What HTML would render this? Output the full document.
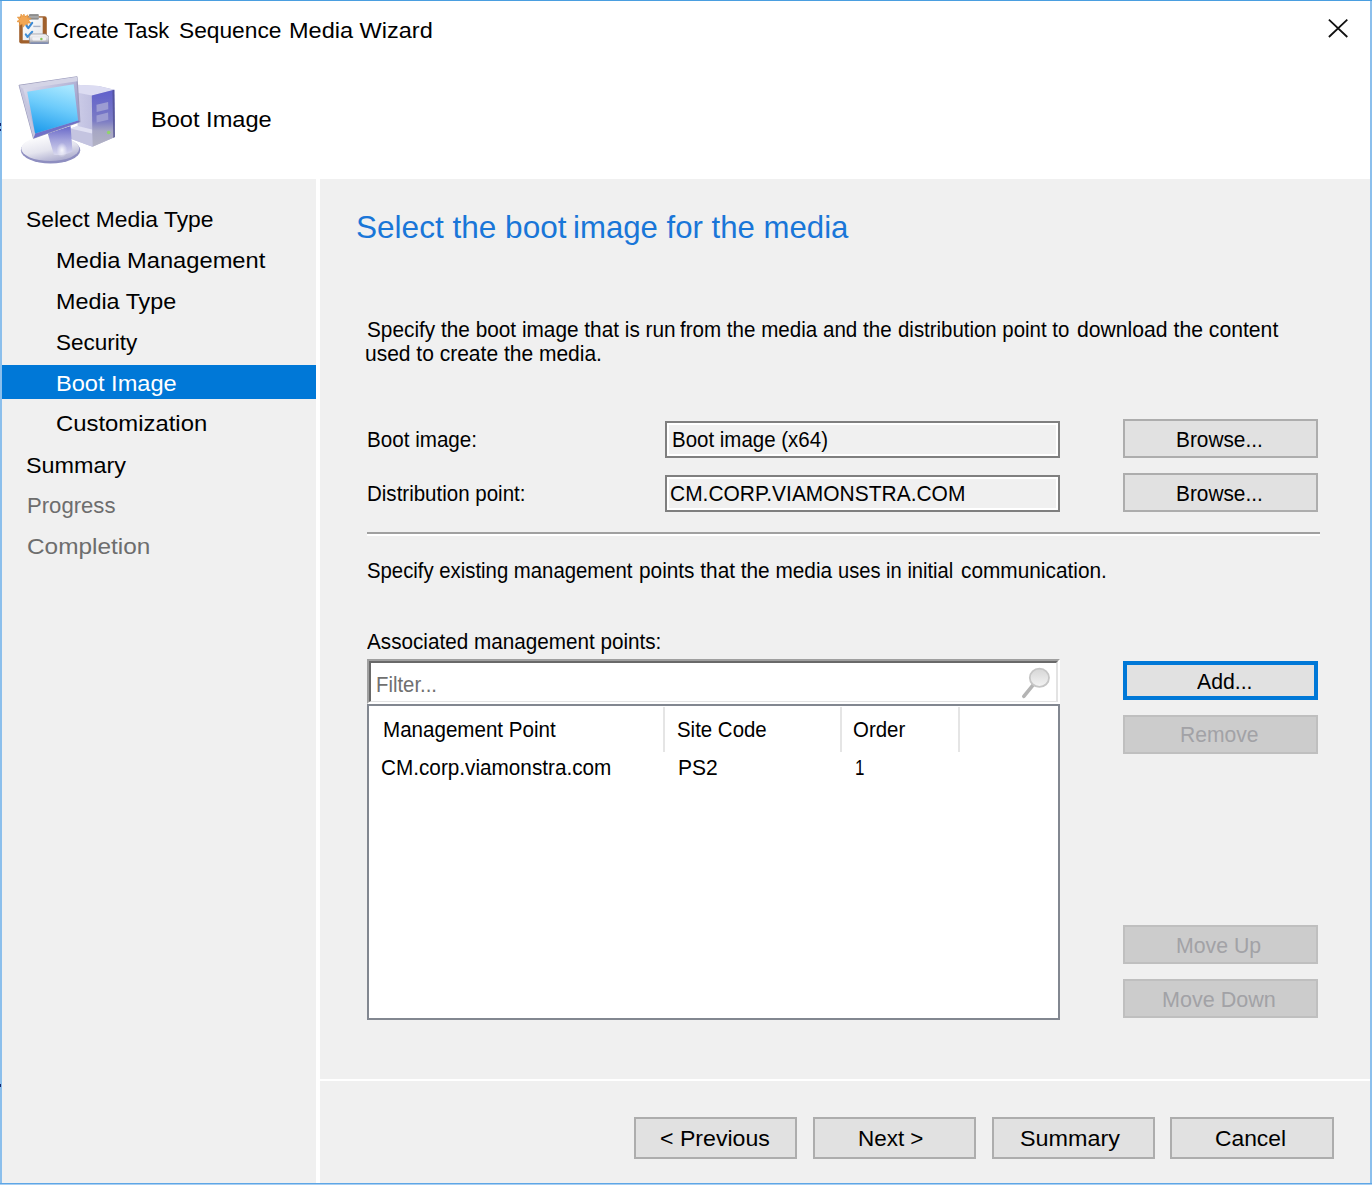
<!DOCTYPE html>
<html><head><meta charset="utf-8"><title>Create Task Sequence Media Wizard</title>
<style>
html,body{margin:0;padding:0;}
body{width:1372px;height:1185px;position:relative;overflow:hidden;background:#fff;font-family:"Liberation Sans",sans-serif;}
.a{position:absolute;box-sizing:border-box;}
.t{position:absolute;white-space:pre;line-height:1;transform-origin:0 0;font-family:"Liberation Sans",sans-serif;}
.btn{background:#e1e1e1;border:2px solid #adadad;}
.btnd{background:#cccccc;border:2px solid #bfbfbf;}
.inp{background:#f0f0f0;border:2px solid #7f7f7f;box-shadow:inset 0 0 0 2px #fff;}
.div{width:2px;height:45px;top:707px;background:#e5e5e5;}
</style></head><body>
<!-- panels -->
<div class="a" style="left:2px;top:179px;width:314px;height:1004px;background:#f0f0f0;"></div>
<div class="a" style="left:320px;top:179px;width:1050px;height:1004px;background:#f0f0f0;"></div>
<div class="a" style="left:2px;top:365px;width:314px;height:33.5px;background:#0078d7;"></div>
<div class="a" style="left:320px;top:1079px;width:1050px;height:2px;background:#fff;"></div>
<!-- window borders -->
<div class="a" style="left:0;top:0;width:2px;height:1185px;background:#8bbfec;"></div>
<div class="a" style="left:1370px;top:0;width:2px;height:1185px;background:#8bbfec;"></div>
<div class="a" style="left:0;top:0;width:1372px;height:1px;background:#4a9ee0;"></div>
<div class="a" style="left:0;top:1183px;width:1372px;height:1px;background:#5ea6e6;"></div>
<div class="a" style="left:0;top:1184px;width:1372px;height:1px;background:#a8cff2;"></div>
<div class="a" style="left:0;top:123px;width:1px;height:3px;background:#14246e;"></div>
<div class="a" style="left:0;top:129px;width:1px;height:2px;background:#14246e;"></div>
<div class="a" style="left:0;top:1084px;width:1px;height:3px;background:#14246e;"></div>
<!-- close X -->
<svg class="a" style="left:1324px;top:15px" width="28" height="26" viewBox="0 0 28 26"><path d="M4.9 4.6 L23.3 22 M23.3 4.6 L4.9 22" stroke="#111" stroke-width="1.8" fill="none"/></svg>
<!-- inputs -->
<div class="a inp" style="left:665px;top:421px;width:395px;height:37px;"></div>
<div class="a inp" style="left:665px;top:475px;width:395px;height:37px;"></div>
<!-- browse buttons -->
<div class="a btn" style="left:1123px;top:419px;width:195px;height:39px;"></div>
<div class="a btn" style="left:1123px;top:473px;width:195px;height:39px;"></div>
<!-- etched line -->
<div class="a" style="left:367px;top:532px;width:953px;height:2px;background:#a0a0a0;"></div>
<div class="a" style="left:367px;top:534px;width:953px;height:2px;background:#fff;"></div>
<!-- filter box (sunken) -->
<div class="a" style="left:367px;top:659px;width:693px;height:44.5px;background:#fff;border-top:2px solid #a0a0a0;border-left:2px solid #a0a0a0;border-right:2px solid #fff;border-bottom:2px solid #fff;"></div>
<div class="a" style="left:369px;top:661px;width:689px;height:40.5px;background:#fff;border-top:2px solid #696969;border-left:2px solid #696969;border-right:2px solid #e3e3e3;border-bottom:1.5px solid #e3e3e3;"></div>
<!-- magnifier -->
<svg class="a" style="left:1018px;top:662px" width="38" height="38" viewBox="0 0 38 38">
 <defs><linearGradient id="mg" x1="0" y1="0" x2="0" y2="1"><stop offset="0" stop-color="#d6d6d6"/><stop offset="1" stop-color="#f4f4f4"/></linearGradient></defs>
 <path d="M15.2 22.8 L5.8 34.4" stroke="#b4b4b4" stroke-width="3.6" stroke-linecap="round"/>
 <ellipse cx="21.4" cy="15.8" rx="9.6" ry="9.1" fill="url(#mg)" stroke="#c6c6c6" stroke-width="1.8"/>
</svg>
<!-- list -->
<div class="a" style="left:367px;top:703.5px;width:693px;height:316px;background:#fff;border:2px solid #828790;"></div>
<div class="a div" style="left:663px;"></div>
<div class="a div" style="left:840px;"></div>
<div class="a div" style="left:958px;"></div>
<!-- right buttons -->
<div class="a" style="left:1123px;top:660.5px;width:195px;height:39.5px;background:#e1e1e1;border:4px solid #0078d7;"></div>
<div class="a btnd" style="left:1123px;top:714.5px;width:195px;height:39px;"></div>
<div class="a btnd" style="left:1123px;top:925px;width:195px;height:39px;"></div>
<div class="a btnd" style="left:1123px;top:979px;width:195px;height:39px;"></div>
<!-- bottom buttons -->
<div class="a btn" style="left:634px;top:1116.5px;width:163px;height:42.5px;"></div>
<div class="a btn" style="left:812.5px;top:1116.5px;width:163.5px;height:42.5px;"></div>
<div class="a btn" style="left:991.5px;top:1116.5px;width:163px;height:42.5px;"></div>
<div class="a btn" style="left:1170px;top:1116.5px;width:163.5px;height:42.5px;"></div>
<!-- title icon: clipboard + star + drive (32x30 at 17,14) -->
<svg class="a" style="left:17px;top:14px" width="32" height="30" viewBox="0 0 32 30">
 <defs>
  <linearGradient id="pg" x1="0" y1="0" x2="1" y2="1"><stop offset="0" stop-color="#ffffff"/><stop offset="1" stop-color="#e4e6ea"/></linearGradient>
  <linearGradient id="dg" x1="0" y1="0" x2="0" y2="1"><stop offset="0" stop-color="#fafafa"/><stop offset=".55" stop-color="#d4d4d8"/><stop offset="1" stop-color="#8e8e96"/></linearGradient>
  <linearGradient id="cg" x1="0" y1="0" x2="0" y2="1"><stop offset="0" stop-color="#6e6e6e"/><stop offset=".5" stop-color="#b4b4b4"/><stop offset="1" stop-color="#707070"/></linearGradient>
 </defs>
 <rect x="2.2" y="2.3" width="27.6" height="27.2" rx="2.2" fill="#a0602c"/>
 <rect x="5.7" y="3.6" width="20" height="22.6" fill="url(#pg)"/>
 <rect x="12" y="0.3" width="9.8" height="5.3" rx="0.8" fill="url(#cg)"/>
 <path d="M6.7 -0.6 L8.2 2.6 L11 0.7 L10.8 4.1 L14.2 4.2 L11.9 6.6 L14 9.2 L10.7 9 L10.6 12.4 L8.1 10.2 L6.4 13.2 L5.2 10 L2.2 11.6 L2.9 8.3 L-0.4 7.6 L2.3 5.7 L0.3 3 L3.6 3.2 L3.9 -0.1 L6.1 2.3 Z" fill="#f2a653" stroke="#e08f32" stroke-width=".5"/>
 <path d="M9.4 11.6 L11.3 14.2 L15.2 8.8" fill="none" stroke="#3a88d4" stroke-width="2.1" stroke-linecap="round" stroke-linejoin="round"/>
 <path d="M8.8 20.4 L10.5 23 L15.2 17.8" fill="none" stroke="#4090d8" stroke-width="2.1" stroke-linecap="round" stroke-linejoin="round"/>
 <rect x="16.3" y="11.7" width="7.2" height="1.4" fill="#a9b3c6"/>
 <path d="M14 20 H28.4 L32 22.6 V28.4 Q32 29.7 30.6 29.7 H13.8 Q12.4 29.7 12.4 28.4 V22.6 Z" fill="url(#dg)" stroke="#8c8c96" stroke-width=".7"/>
 <rect x="15.4" y="23.2" width="13.6" height="3.2" rx="1" fill="#f4f4f6" opacity=".9"/>
 <rect x="13.6" y="28.6" width="17.4" height="0.9" fill="#6a84c4"/>
 <circle cx="24.4" cy="25" r="1.25" fill="#86c65a"/>
</svg>
<!-- computer icon (drawn in 11.39x zoom coords) -->
<svg class="a" style="left:10px;top:68px" width="120" height="104" viewBox="0 0 1367 1185">
 <defs>
  <linearGradient id="scr" x1=".6" y1="0" x2=".3" y2="1"><stop offset="0" stop-color="#a6e6ff"/><stop offset=".45" stop-color="#6ccbfb"/><stop offset="1" stop-color="#1f9cec"/></linearGradient>
  <linearGradient id="bez" x1="0" y1="0" x2="1" y2="1"><stop offset="0" stop-color="#e6e6f2"/><stop offset=".5" stop-color="#b4b4d6"/><stop offset="1" stop-color="#8484bc"/></linearGradient>
  <linearGradient id="base" x1=".2" y1="0" x2=".7" y2="1"><stop offset="0" stop-color="#ffffff"/><stop offset=".55" stop-color="#e4e4ee"/><stop offset="1" stop-color="#a8a8cc"/></linearGradient>
  <linearGradient id="twl" x1="0" y1="0" x2="1" y2="0"><stop offset="0" stop-color="#d0d0ea"/><stop offset="1" stop-color="#aeaed6"/></linearGradient>
  <linearGradient id="twr" x1="0" y1="0" x2="0" y2="1"><stop offset="0" stop-color="#6060cc"/><stop offset=".55" stop-color="#7c7cc4"/><stop offset=".72" stop-color="#a6a6c4"/><stop offset="1" stop-color="#b4b4c4"/></linearGradient>
  <radialGradient id="nh"><stop offset="0" stop-color="#fff" stop-opacity=".85"/><stop offset="1" stop-color="#fff" stop-opacity="0"/></radialGradient>
  <linearGradient id="neck" x1="0" y1="0" x2="0" y2="1"><stop offset="0" stop-color="#6666c8"/><stop offset=".5" stop-color="#a4a4dc"/><stop offset="1" stop-color="#d8d8ee"/></linearGradient>
 </defs>
 <!-- tower -->
 <path d="M758 192 L1010 205 L1188 248 L1196 785 L940 898 L690 805 L690 690 L770 660 Z" fill="url(#twl)"/>
 <path d="M758 192 L1010 205 L1188 248 L932 312 L770 282 Z" fill="#dcdcf2"/>
 <path d="M932 312 L1188 248 L1196 785 L940 898 Z" fill="url(#twr)"/>
 <path d="M1168 255 L1188 248 L1196 785 L1176 794 Z" fill="#4e4e8e" opacity=".75"/>
 <path d="M985 418 L1118 388 L1120 470 L987 500 Z" fill="#9c9cd2"/>
 <path d="M985 540 L1118 508 L1120 590 L987 622 Z" fill="#9c9cd2"/>
 <path d="M690 690 L935 745 L940 898 L690 805 Z" fill="#c4c4e0"/>
 <path d="M690 690 L770 660 L935 700 L935 745 Z" fill="#e0e0f2"/>
 <circle cx="1124" cy="736" r="20" fill="#8fd66a"/>
 <!-- base -->
 <ellipse cx="462" cy="936" rx="338" ry="152" fill="#8e8ec0"/>
 <ellipse cx="458" cy="918" rx="330" ry="142" fill="url(#base)"/>
 <!-- neck -->
 <path d="M430 745 L690 660 L712 950 Q600 1005 500 988 Z" fill="url(#neck)"/>
 <ellipse cx="592" cy="935" rx="62" ry="85" fill="url(#nh)"/>
 <!-- monitor -->
 <path d="M105 198 L762 100 L796 612 L268 800 Z" fill="url(#bez)" stroke="#9c9cbc" stroke-width="14" stroke-linejoin="round"/>
 <path d="M105 198 L762 100 L768 150 L150 240 Z" fill="#d4d4e6"/>
 <path d="M286 746 L776 598 L796 612 L268 800 Z" fill="#7070c8"/>
 <path d="M105 198 L150 240 L286 746 L268 800 Z" fill="#c6c6de"/>
 <path d="M196 272 L726 186 L776 598 L286 746 Z" fill="url(#scr)"/>
</svg>

<span class="t" style="left:53.08px;top:21.10px;font-size:21.5px;color:#000;transform:scaleX(1.0170)">Create Task</span>
<span class="t" style="left:178.80px;top:21.10px;font-size:21.5px;color:#000;transform:scaleX(1.0576)">Sequence</span>
<span class="t" style="left:288.81px;top:21.10px;font-size:21.5px;color:#000;transform:scaleX(1.0937)">Media Wizard</span>
<span class="t" style="left:150.65px;top:108.50px;font-size:22.5px;color:#000;transform:scaleX(1.0488)">Boot Image</span>
<span class="t" style="left:26.48px;top:208.80px;font-size:22.5px;color:#000;transform:scaleX(1.0153)">Select Media Type</span>
<span class="t" style="left:56.35px;top:249.70px;font-size:22.5px;color:#000;transform:scaleX(1.0523)">Media Management</span>
<span class="t" style="left:56.36px;top:290.60px;font-size:22.5px;color:#000;transform:scaleX(1.0375)">Media Type</span>
<span class="t" style="left:56.00px;top:331.50px;font-size:22.5px;color:#000;transform:scaleX(1.0009)">Security</span>
<span class="t" style="left:56.35px;top:372.50px;font-size:22.5px;color:#fff;transform:scaleX(1.0488)">Boot Image</span>
<span class="t" style="left:56.34px;top:413.30px;font-size:22.5px;color:#000;transform:scaleX(1.0607)">Customization</span>
<span class="t" style="left:26.46px;top:454.50px;font-size:22.5px;color:#000;transform:scaleX(1.0395)">Summary</span>
<span class="t" style="left:27.32px;top:495.10px;font-size:22.5px;color:#6d6d6d;transform:scaleX(0.9822)">Progress</span>
<span class="t" style="left:27.22px;top:536.00px;font-size:22.5px;color:#6d6d6d;transform:scaleX(1.0829)">Completion</span>
<span class="t" style="left:355.67px;top:212.30px;font-size:30.5px;color:#1976d8;transform:scaleX(1.0345)">Select the boot</span>
<span class="t" style="left:573.16px;top:212.30px;font-size:30.5px;color:#1976d8;transform:scaleX(1.0217)">image for the media</span>
<span class="t" style="left:367.00px;top:319.70px;font-size:21.5px;color:#000;transform:scaleX(0.9672)">Specify the boot image that is run</span>
<span class="t" style="left:679.90px;top:319.70px;font-size:21.5px;color:#000;transform:scaleX(0.9571)">from the media and the</span>
<span class="t" style="left:898.00px;top:319.70px;font-size:21.5px;color:#000;transform:scaleX(0.9490)">distribution point to</span>
<span class="t" style="left:1076.70px;top:319.70px;font-size:21.5px;color:#000;transform:scaleX(0.9847)">download the content</span>
<span class="t" style="left:364.62px;top:343.80px;font-size:21.5px;color:#000;transform:scaleX(0.9765)">used to create the media.</span>
<span class="t" style="left:366.94px;top:429.50px;font-size:21.5px;color:#000;transform:scaleX(0.9587)">Boot image:</span>
<span class="t" style="left:367.25px;top:483.50px;font-size:21.5px;color:#000;transform:scaleX(0.9541)">Distribution point:</span>
<span class="t" style="left:671.65px;top:429.50px;font-size:21.5px;color:#000;transform:scaleX(0.9526)">Boot image (x64)</span>
<span class="t" style="left:669.83px;top:483.50px;font-size:21.5px;color:#000;transform:scaleX(0.9747)">CM.CORP.VIAMONSTRA.COM</span>
<span class="t" style="left:1175.73px;top:429.60px;font-size:21.5px;color:#000;transform:scaleX(0.9688)">Browse...</span>
<span class="t" style="left:1175.73px;top:483.50px;font-size:21.5px;color:#000;transform:scaleX(0.9688)">Browse...</span>
<span class="t" style="left:367.40px;top:561.40px;font-size:21.5px;color:#000;transform:scaleX(0.9453)">Specify existing management</span>
<span class="t" style="left:639.33px;top:561.40px;font-size:21.5px;color:#000;transform:scaleX(0.9676)">points that the media</span>
<span class="t" style="left:838.46px;top:561.40px;font-size:21.5px;color:#000;transform:scaleX(0.9364)">uses in initial</span>
<span class="t" style="left:961.30px;top:561.40px;font-size:21.5px;color:#000;transform:scaleX(0.9687)">communication.</span>
<span class="t" style="left:367.00px;top:632.00px;font-size:21.5px;color:#000;transform:scaleX(0.9620)">Associated management points:</span>
<span class="t" style="left:376.35px;top:675.00px;font-size:21.5px;color:#707070;transform:scaleX(0.9450)">Filter...</span>
<span class="t" style="left:382.64px;top:719.70px;font-size:21.5px;color:#000;transform:scaleX(0.9566)">Management Point</span>
<span class="t" style="left:677.30px;top:719.70px;font-size:21.5px;color:#000;transform:scaleX(0.9501)">Site Code</span>
<span class="t" style="left:852.85px;top:719.70px;font-size:21.5px;color:#000;transform:scaleX(0.9499)">Order</span>
<span class="t" style="left:380.94px;top:758.10px;font-size:21.5px;color:#000;transform:scaleX(0.9640)">CM.corp.viamonstra.com</span>
<span class="t" style="left:677.62px;top:758.10px;font-size:21.5px;color:#000;transform:scaleX(0.9798)">PS2</span>
<span class="t" style="left:855.01px;top:758.10px;font-size:21.5px;color:#000;transform:scaleX(0.7900)">1</span>
<span class="t" style="left:1197.40px;top:671.50px;font-size:21.5px;color:#000;transform:scaleX(0.9873)">Add...</span>
<span class="t" style="left:1179.62px;top:725.20px;font-size:21.5px;color:#a2a2a6;transform:scaleX(0.9808)">Remove</span>
<span class="t" style="left:1175.51px;top:935.70px;font-size:21.5px;color:#a2a2a6;transform:scaleX(0.9897)">Move Up</span>
<span class="t" style="left:1161.90px;top:989.70px;font-size:21.5px;color:#a2a2a6;transform:scaleX(1.0031)">Move Down</span>
<span class="t" style="left:660.17px;top:1127.70px;font-size:22.5px;color:#000;transform:scaleX(1.0276)">&lt; Previous</span>
<span class="t" style="left:858.00px;top:1127.70px;font-size:22.5px;color:#000;transform:scaleX(0.9967)">Next &gt;</span>
<span class="t" style="left:1020.16px;top:1127.70px;font-size:22.5px;color:#000;transform:scaleX(1.0384)">Summary</span>
<span class="t" style="left:1215.39px;top:1127.70px;font-size:22.5px;color:#000;transform:scaleX(1.0141)">Cancel</span>
</body></html>
